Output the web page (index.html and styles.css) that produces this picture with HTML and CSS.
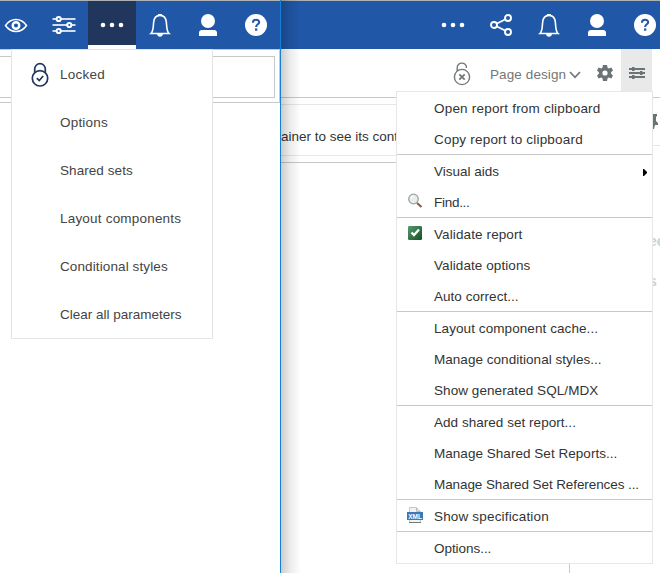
FILE: index.html
```html
<!DOCTYPE html>
<html lang="en">
<head>
<meta charset="utf-8">
<title>Report toolbar menus</title>
<link rel="stylesheet" href="styles.css">
</head>
<body>
<svg class="defs" width="0" height="0">
  <symbol id="dots" viewBox="0 0 24 24"><g fill="#fff"><circle cx="3" cy="12" r="2.3"/><circle cx="12" cy="12" r="2.3"/><circle cx="21" cy="12" r="2.3"/></g></symbol>
  <symbol id="bell" viewBox="0 0 24 24"><path d="M3 20.500H21C18.700 18.500 18.800 15 18.400 9.500C18 5 15.500 2.400 12 2.400S6 5 5.600 9.500C5.200 15 5.300 18.500 3 20.500Z" fill="none" stroke="#fff" stroke-width="1.600"/><path d="M10 1h4v2h-4zM9 20.500h6c0 2-1 3.200-3 3.200s-3-1.200-3-3.200Z" fill="#fff"/></symbol>
  <symbol id="user" viewBox="0 0 24 24"><g fill="#fff"><circle cx="12" cy="8" r="7"/><path d="M3 23v-3q0-3 3-3h12q3 0 3 3v3Z"/></g></symbol>
  <symbol id="help" viewBox="0 0 24 24"><circle cx="12" cy="12" r="11" fill="#fff"/><path d="M8.900 9.700C8.900 5.800 15.200 5.900 15.200 9.200C15.200 11.400 12.100 11.300 12.100 14.100" fill="none" stroke="#2057a7" stroke-width="2"/><path d="M11 15.400h2.300v2.300H11z" fill="#2057a7"/></symbol>
</svg>
<main class="screen">
  <section class="front">
    <header class="bar bar-front">
      <span class="cell"><svg viewBox="0 0 24 24" width="24" height="24"><path d="M1.500 12.500C7 4.500 17 4.500 22.500 12.500C17 20.500 7 20.500 1.500 12.500Z" fill="none" stroke="#fff" stroke-width="1.500"/><circle cx="12" cy="12.500" r="3.300" fill="none" stroke="#fff" stroke-width="2.400"/></svg></span>
      <span class="cell"><svg viewBox="0 0 24 24" width="24" height="24"><path d="M.5 6h23M.5 12h23M.5 18h23" stroke="#d2ddec" stroke-width="2"/><g fill="#2057a7" stroke="#fff" stroke-width="2"><circle cx="6.700" cy="6" r="2.100"/><circle cx="17.300" cy="12" r="2.100"/><circle cx="6.700" cy="18" r="2.100"/></g></svg></span>
      <span class="cell active"><svg width="24" height="24"><use href="#dots"/></svg></span>
      <span class="cell"><svg width="24" height="24"><use href="#bell"/></svg></span>
      <span class="cell"><svg width="24" height="24"><use href="#user"/></svg></span>
      <span class="cell"><svg width="24" height="24"><use href="#help"/></svg></span>
    </header>
    <div class="canvas"><div class="field"></div></div>
    <nav class="menu-front">
      <div class="row"><svg viewBox="0 0 20 26" width="20" height="26" fill="none" stroke="#20365d" stroke-width="1.700"><circle cx="10" cy="16.300" r="7.700"/><path d="M4.700 10.500V7a5.300 5.300 0 0 1 10.600 0v3.500"/><path d="M6.800 16.200l2.400 2.300 4-4.500"/></svg><span class="t1">Locked</span></div>
      <div class="row"><span class="t2">Options</span></div>
      <div class="row"><span class="t3">Shared sets</span></div>
      <div class="row"><span class="t4">Layout components</span></div>
      <div class="row"><span class="t5">Conditional styles</span></div>
      <div class="row"><span class="t6">Clear all parameters</span></div>
    </nav>
  </section>
  <section class="back">
    <header class="bar bar-back">
      <span class="cell"><svg width="24" height="24"><use href="#dots"/></svg></span>
      <span class="cell"><svg viewBox="0 0 24 24" width="24" height="24" fill="none" stroke="#fff" stroke-width="1.900"><path d="M8 10.500l8-4M8 13.500l8 4"/><circle cx="5" cy="12" r="3"/><circle cx="19" cy="5" r="3"/><circle cx="19" cy="19" r="3"/></svg></span>
      <span class="cell"><svg width="24" height="24"><use href="#bell"/></svg></span>
      <span class="cell"><svg width="24" height="24"><use href="#user"/></svg></span>
      <span class="cell"><svg width="24" height="24"><use href="#help"/></svg></span>
    </header>
    <div class="tools">
      <svg class="unlock" viewBox="0 0 18 24" width="18" height="24" fill="none" stroke="#727777" stroke-width="1.400"><circle cx="9" cy="15" r="7.600"/><path d="M4.200 9V6C4.200-.5 13.500-.5 13.500 6"/><path d="M6.300 12.300l5.400 5.400M11.700 12.300l-5.400 5.400" stroke-width="1.800"/></svg>
      <span class="design">Page design</span>
      <svg class="chevron" viewBox="0 0 12 8" width="12" height="8"><path d="M1 1l5 5.300L11 1" fill="none" stroke="#6f7777" stroke-width="1.700"/></svg>
      <svg class="gear" viewBox="0 0 16 16" width="16" height="16"><path d="M6 0h4l.6 2.700 1.200.7 2.600-.9 1.600 3.100-1.900 1.700v1.400l1.900 1.700-1.600 3.100-2.600-.9-1.200.7L10 16H6l-.6-2.700-1.200-.7-2.600.9L0 10.400l1.900-1.700V7.300L0 5.600l1.600-3.100 2.600.9 1.200-.7ZM8 5.400a2.600 2.600 0 1 0 0 5.200a2.600 2.600 0 0 0 0-5.200Z" fill="#6b7475" fill-rule="evenodd"/></svg>
      <span class="toggle"><svg viewBox="0 0 16 12" width="16" height="12"><path d="M0 2h16M0 6h16M0 10h16" stroke="#6b7475" stroke-width="2"/><path d="M3 0h2.500v4H3zM11 4h2.500v4H11zM3 8h2.500v4H3z" fill="#6b7475"/></svg></span>
    </div>
    <div class="rule"></div>
    <div class="hint"><span class="hint-text">ainer to see its cont</span></div>
    <div class="page"></div>
    <div class="shadow"></div>
    <aside class="side">
      <div class="pin"><svg viewBox="0 0 6 17" width="6" height="17"><path d="M0 0h4v2L3 3v4L5 9v2H2l-1 4H0Z" fill="#6b7475"/></svg></div>
      <div class="clipped e"><span>ee</span></div>
      <div class="clipped s"><span>s</span></div>
    </aside>
    <nav class="menu-back">
      <div class="group"><div class="item"><span class="m1">Open report from clipboard</span></div><div class="item"><span class="m2">Copy report to clipboard</span></div></div>
      <div class="group"><div class="item"><span class="m3">Visual aids</span><svg class="arrow" viewBox="0 0 4 7" width="4" height="7"><path d="M0 0h1l3 3v1L1 7H0Z"/></svg></div>
      <div class="item"><svg class="ico" viewBox="0 0 16 16" width="16" height="16"><path d="M10 10l4.500 4" stroke="#80604f" stroke-width="2.200"/><circle cx="6.500" cy="6" r="4.800" fill="#e8edf0" stroke="#a1a1a1" stroke-width="1.300"/><path d="M4 6q0-3 3-3" stroke="#fff" fill="none"/></svg><span class="m4">Find...</span></div></div>
      <div class="group"><div class="item"><svg class="ico" viewBox="0 0 16 16" width="16" height="16"><defs><linearGradient id="green" x2="1" y2="1"><stop stop-color="#559b70"/><stop offset="1" stop-color="#184f20"/></linearGradient></defs><rect x="1" y="1" width="14" height="14" rx="1.200" fill="url(#green)"/><path d="M4.500 7.500l2.500 2.600 5-5.500" fill="none" stroke="#fff" stroke-width="2.300"/></svg><span class="m5">Validate report</span></div><div class="item"><span class="m6">Validate options</span></div><div class="item"><span class="m7">Auto correct...</span></div></div>
      <div class="group"><div class="item"><span class="m8">Layout component cache...</span></div><div class="item"><span class="m9">Manage conditional styles...</span></div><div class="item"><span class="m10">Show generated SQL/MDX</span></div></div>
      <div class="group"><div class="item"><span class="m11">Add shared set report...</span></div><div class="item"><span class="m12">Manage Shared Set Reports...</span></div><div class="item"><span class="m13">Manage Shared Set References ...</span></div></div>
      <div class="group"><div class="item"><svg class="ico" viewBox="0 0 16 16" width="16" height="16"><path d="M2.500 15.500V.5h7l4 4v11Z" fill="#f1f3f0" stroke="#c1c8c1"/><path d="M9.500.5v4h4" fill="#dae2d5" stroke="#b5c0b0"/><path d="M2 15.500h12" stroke="#777"/><rect y="5" width="16" height="8" fill="#3d78b5"/><text class="xml" x="8" y="11.500" text-anchor="middle">XML</text></svg><span class="m14">Show specification</span></div></div>
      <div class="group"><div class="item"><span class="m15">Options...</span></div></div>
    </nav>
  </section>
</main>
</body>
</html>
```
FILE: styles.css
```css
* { box-sizing: border-box; }
body { margin: 0; background: #fff; font-family: "Liberation Sans", Arial, sans-serif; }
svg { display: block; flex: none; }
.defs { position: absolute; }
.screen { display: grid; grid-template-columns: 281px 379px; width: 660px; height: 573px; overflow: hidden; }
.front { position: relative; border-right: 1px solid #1580d6; overflow: hidden; }
.back { position: relative; overflow: hidden; }
.bar { display: flex; height: 49px; background: #2057a7; border-top: 1px solid #adb1b5; }
.bar-front { margin-left: -8px; }
.bar-back { padding-left: 148px; }
.cell { display: flex; flex: 0 0 48px; width: 48px; height: 48px; align-items: center; justify-content: center; }
.active { background: #20365d; border-bottom: 4px solid #fff; padding-top: 4px; }
.canvas { height: 54px; padding: 6px 4px 4px 0; border: solid #c8c8c8; border-width: 1px 1px 1px 0; }
.field { height: 42px; border: solid #c8c8c8; border-width: 1px 1px 1px 0; }
.menu-front { position: absolute; left: 11px; top: 49px; width: 202px; height: 290px; background: #fff; border: 1px solid #e4e4e4; }
.row { display: flex; align-items: center; height: 48px; padding: 1px 0 0 48px; font-size: 13.5px; color: #444; white-space: nowrap; }
.row svg { margin-left: -30px; margin-right: 10px; margin-top: 1px; }
.t1 { letter-spacing: .27px; }
.t2 { letter-spacing: .2px; }
.t3 { letter-spacing: .07px; }
.t4 { letter-spacing: .2px; }
.t5 { letter-spacing: .11px; }

.tools { display: flex; align-items: center; height: 48px; padding: 1px 8px 0 172px; }
.design { width: 76px; margin-left: 19px; padding-top: 1px; font-size: 13.5px; letter-spacing: .1px; color: #727777; white-space: nowrap; }
.chevron { margin-left: 3px; margin-top: 3px; }
.gear { margin-left: 16px; margin-top: -2px; }
.toggle { display: flex; align-self: stretch; width: 31px; margin-left: 8px; margin-top: -1px; padding-bottom: 1px; align-items: center; justify-content: center; background: #e9e9e9; }
.rule { height: 8px; border: solid; border-width: 1px 0; border-color: #c8c8c8 transparent #e7e7e7; }
.hint { height: 51px; padding-top: 24px; border-bottom: 1px solid #e7e7e7; font-size: 13.5px; line-height: 16px; color: #333; white-space: nowrap; }
.page { width: 289px; height: 417px; margin-top: 6px; border: solid #c8c8c8; border-width: 1px 1px 0 0; }
.shadow { position: absolute; left: 0; top: 0; width: 20px; height: 573px; background: linear-gradient(90deg, rgba(0,0,0,.2), rgba(0,0,0,.08) 45%, transparent); }
.side { position: absolute; left: 372px; top: 98px; width: 7px; height: 475px; background: #fff; overflow: hidden; }
.pin { height: 48px; padding-top: 16px; border-bottom: 1px solid #e7e7e7; }
.clipped { height: 40px; color: #ccd1d5; font-size: 14px; font-weight: bold; line-height: 16px; white-space: nowrap; }
.e { margin-top: 87px; margin-left: -4px; }
.s { margin-left: -4px; }

.menu-back { position: absolute; left: 115px; top: 91px; width: 257px; height: 473px; background: #fff; border: 1px solid #e7e7e7; }
.group + .group { border-top: 1px solid #c8c8c8; }
.item { position: relative; display: flex; align-items: center; height: 31px; padding: 1px 0 0 37px; font-size: 13.5px; color: #333; white-space: nowrap; }
.ico { margin-left: -27px; margin-right: 11px; margin-top: -3px; }
.arrow { position: absolute; left: 246px; top: 14px; }
.xml { font: bold 6.5px "Liberation Sans", Arial, sans-serif; fill: #fff; }
.m1, .m2 { letter-spacing: .2px; }
.m4 { letter-spacing: -.28px; }
.m5 { letter-spacing: .11px; }
.m6, .m8 { letter-spacing: .08px; }
.m7, .m9, .m11, .m12 { letter-spacing: .035px; }
.m10 { letter-spacing: .07px; }
.m13 { letter-spacing: -.09px; }
.m14 { letter-spacing: .17px; }
.m15 { letter-spacing: -.05px; }
```
